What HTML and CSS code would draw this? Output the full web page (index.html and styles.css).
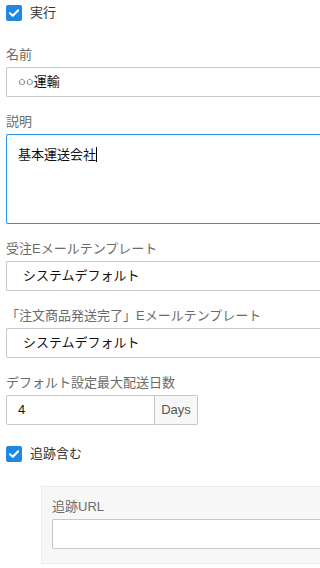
FILE: index.html
```html
<!DOCTYPE html>
<html lang="ja">
<head>
<meta charset="utf-8">
<link rel="stylesheet" href="styles.css">
</head>
<body>
<div class="form">
  <div class="check-row">
    <span class="checkbox"><svg viewBox="0 0 16 16" width="16" height="16"><polyline points="4,8.2 6.8,10.8 12,5.4" fill="none" stroke="#fff" stroke-width="2.2" stroke-linecap="round" stroke-linejoin="round"/></svg></span>
    <span class="check-label">実行</span>
  </div>

  <div class="group g-name">
    <label class="label">名前</label>
    <div class="field">○○運輸</div>
  </div>

  <div class="group">
    <label class="label">説明</label>
    <div class="field textarea">基本運送会社<span class="caret"></span></div>
  </div>

  <div class="group">
    <label class="label">受注Eメールテンプレート</label>
    <div class="field select">システムデフォルト</div>
  </div>

  <div class="group">
    <label class="label">「注文商品発送完了」Eメールテンプレート</label>
    <div class="field select">システムデフォルト</div>
  </div>

  <div class="group">
    <label class="label">デフォルト設定最大配送日数</label>
    <div class="input-group">
      <div class="ig-input">4</div>
      <div class="ig-addon">Days</div>
    </div>
  </div>

  <div class="check-row check-two">
    <span class="checkbox"><svg viewBox="0 0 16 16" width="16" height="16"><polyline points="4,8.2 6.8,10.8 12,5.4" fill="none" stroke="#fff" stroke-width="2.2" stroke-linecap="round" stroke-linejoin="round"/></svg></span>
    <span class="check-label">追跡含む</span>
  </div>

  <div class="panel">
    <label class="label">追跡URL</label>
    <div class="field"></div>
  </div>
</div>
</body>
</html>
```

FILE: styles.css
```css
html, body {
  margin: 0;
  padding: 0;
  background: #fff;
}
body {
  font-family: "Liberation Sans", "Noto Sans CJK JP", sans-serif;
  font-size: 13px;
  color: #222;
}
.form {
  padding: 5px 0 0 6px;
}
.check-row {
  display: flex;
  align-items: center;
  height: 16px;
}
.checkbox {
  width: 16px;
  height: 16px;
  border-radius: 2px;
  background: #1e88e5;
  display: flex;
}
.check-label {
  margin-left: 8px;
  color: #333;
  line-height: 16px;
}
.group {
  margin-bottom: 16px;
}
.g-name {
  margin-top: 25px;
}
.label {
  display: block;
  line-height: 18px;
  margin-bottom: 3px;
  color: #6b6b6b;
}
.field {
  box-sizing: border-box;
  height: 30px;
  border: 1px solid #c8c8c8;
  border-right: 0;
  border-radius: 2px 0 0 2px;
  background: #fff;
  padding: 0 11px;
  line-height: 28px;
  color: #111;
}
.textarea {
  height: 90px;
  border-color: #2196f3;
  line-height: 18px;
  padding-top: 11px;
}
.caret {
  display: inline-block;
  width: 1px;
  height: 15px;
  background: #000;
  vertical-align: -3px;
}
.select {
  padding-left: 16px;
}
.input-group {
  display: flex;
  width: 192px;
}
.ig-input {
  flex: 1;
  box-sizing: border-box;
  height: 30px;
  border: 1px solid #c8c8c8;
  border-radius: 2px 0 0 2px;
  padding: 0 11px;
  line-height: 28px;
  color: #111;
}
.ig-addon {
  box-sizing: border-box;
  width: 43px;
  height: 30px;
  border: 1px solid #c8c8c8;
  border-left: 0;
  border-radius: 0 2px 2px 0;
  background: #f7f7f7;
  color: #555;
  line-height: 28px;
  text-align: center;
}
.check-two {
  margin-top: 21px;
}
.panel {
  margin: 24px 0 0 35px;
  box-sizing: border-box;
  height: 78px;
  background: #f7f7f7;
  border: 1px solid #ececec;
  border-right: 0;
  padding: 11px 0 0 10px;
}
```
